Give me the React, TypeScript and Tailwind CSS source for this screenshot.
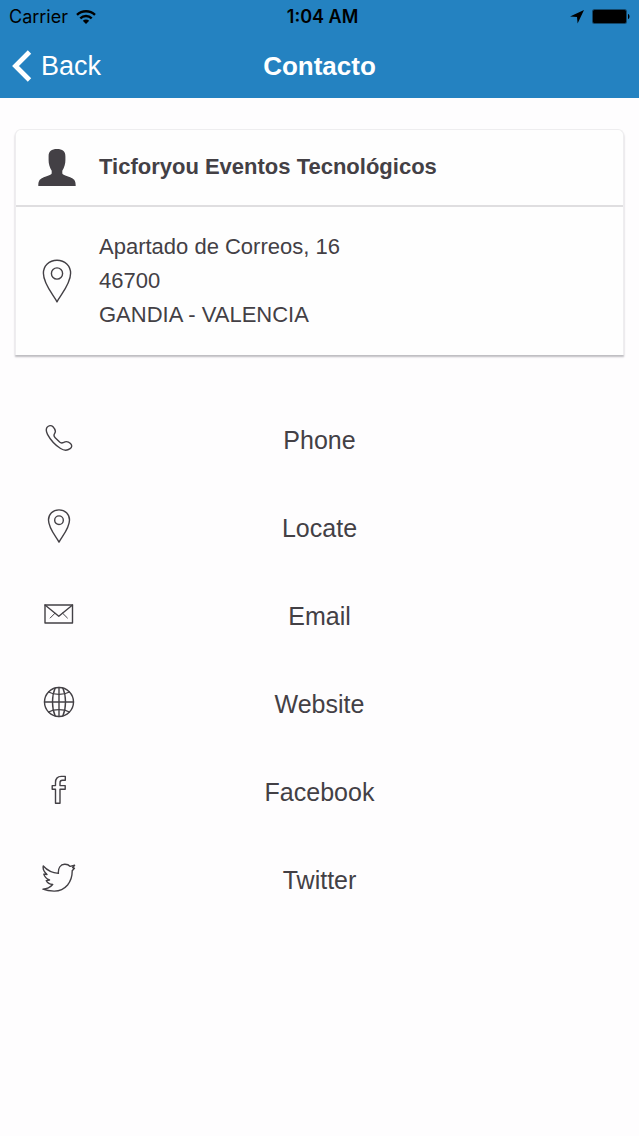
import type { ReactNode } from "react";

function Line({ children, className, viewBox }: { children: ReactNode; className: string; viewBox: string }) {
  return (
    <svg
      aria-hidden="true"
      viewBox={viewBox}
      className={className}
      fill="none"
      stroke="currentColor"
      strokeWidth="1.4"
      strokeLinejoin="round"
      strokeLinecap="round"
    >
      {children}
    </svg>
  );
}

function PinIcon({ className, strokeWidth }: { className: string; strokeWidth: number }) {
  return (
    <Line viewBox="0 0 30 44" className={className}>
      <g strokeWidth={strokeWidth}>
        <path d="M15 42.8C11 35.5 1.4 25 1.4 14.3C1.4 6.8 7 1.2 15 1.2S28.6 6.8 28.6 14.3C28.6 25 19 35.5 15 42.8Z" />
        <circle cx="15" cy="14.5" r="5.6" />
      </g>
    </Line>
  );
}

function PhoneIcon() {
  return (
    <Line viewBox="0 0 28 28" className="size-7">
      <path d="M2 3.4C3.5 1.3 6.3 1 8 2.7C10 4.8 11.1 7.3 9.7 9.3C8.4 11.2 8.7 12.3 10.2 13.8L14.6 18.1C15.8 19.2 17 19.3 18.7 18.4C21 17.1 23.7 17.8 25.5 19.5C27.3 21.2 27 23.5 25.1 24.7C22.6 26.4 19.2 26.8 15.6 24.5C10.2 21 5.3 15.5 2.5 10.3C1.2 7.8 .9 5.2 2 3.4Z" />
    </Line>
  );
}

function MailIcon() {
  return (
    <Line viewBox="0 0 30 20" className="h-5 w-[30px]">
      <path d="M1 1H28.5V19H1Z" />
      <path d="M1 1L14.8 12.2L28.5 1" />
      <path d="M6.2 14L11 9.2M23.4 14L18.6 9.2" strokeWidth="1" />
    </Line>
  );
}

function GlobeIcon() {
  return (
    <Line viewBox="0 0 32 32" className="size-8">
      <circle cx="16" cy="16" r="14.5" />
      <path d="M16 1.5V30.5M1.5 16H30.5" />
      <path d="M12.2 2C8.6 10 8.6 22 12.2 30M19.8 2C23.4 10 23.4 22 19.8 30" />
      <path d="M5.6 6C11 9.2 21 9.2 26.4 6M5.6 26C11 22.8 21 22.8 26.4 26" />
    </Line>
  );
}

function FacebookIcon() {
  return (
    <Line viewBox="0 0 16 30" className="h-[30px] w-4">
      <path d="M4.5 28.3V14.3H1.2V10.6H4.5V7.5C4.5 3.4 6.7 1.4 10.3 1.4H14.3V5.2H11.5C9.7 5.2 9 6.2 9 7.8V10.6H14.2V14.3H9V28.3Z" />
    </Line>
  );
}

function TwitterIcon() {
  return (
    <Line viewBox="0 0 34 30" className="h-[30px] w-[34px]">
      <path d="M16.4 10.4C16 5 18.6 1.6 22.6 1.3C24.9 1.2 26.8 1.9 28.2 3.4L32.6 2.3L30.6 4.7L32.4 5.2L30.2 7.8C30.3 13 28.8 18 25.6 22C22 26.2 17.4 28.2 12 28.1C7.6 28 4.2 27.4 .9 26.2C4.8 25.9 8.2 24.3 10.7 21.5C7.6 21.2 5.6 20 4.3 17.6L7.5 17C4.6 15.8 2.6 13.8 1.8 11.1L5 11.5C2 9 .6 6.2 1.3 3C5.4 7.6 10.4 9.9 16.4 10.4Z" />
    </Line>
  );
}

function PersonIcon() {
  return (
    <svg aria-hidden="true" viewBox="0 0 38 38" className="size-[38px]" fill="currentColor">
      <path d="M19 0C24.4 0 27.5 2.3 27.4 7.4V11C27.5 14.8 26.3 18.6 24.3 21.8V24.6C25.4 26.6 30 27.4 33.6 29C36.6 30.4 37.7 32 37.7 37H.3C.3 32 1.4 30.4 4.4 29C8 27.4 12.6 26.6 13.7 24.6V21.8C11.7 18.6 10.5 14.8 10.6 11V7.4C10.5 2.3 13.6 0 19 0Z" />
    </svg>
  );
}

const actions = [
  { label: "Phone", href: "#phone", icon: <PhoneIcon /> },
  { label: "Locate", href: "#locate", icon: <PinIcon className="h-[34px] w-6" strokeWidth={1.8} /> },
  { label: "Email", href: "#email", icon: <MailIcon /> },
  { label: "Website", href: "#website", icon: <GlobeIcon /> },
  { label: "Facebook", href: "#facebook", icon: <FacebookIcon /> },
  { label: "Twitter", href: "#twitter", icon: <TwitterIcon /> },
];

function StatusBar() {
  return (
    <div className="grid h-[33px] grid-cols-[34fr_33fr_33fr] items-center px-[9px] font-['Inter',sans-serif] text-lg text-black">
      <div className="flex items-center gap-2">
        <span>Carrier</span>
        <svg aria-hidden="true" viewBox="0 0 20 14" className="h-[14px] w-5" fill="none" stroke="currentColor" strokeWidth="2.4">
          <path d="M1 4.9C6 .1 14 .1 19 4.9" />
          <path d="M4.3 8.3C7.5 5.3 12.5 5.3 15.7 8.3" />
          <path d="M10 14L6.8 10.7C8.6 9.2 11.4 9.2 13.2 10.7Z" fill="currentColor" stroke="none" />
        </svg>
      </div>
      <time className="text-center font-semibold">1:04 AM</time>
      <div className="flex items-center justify-end gap-2">
        <svg aria-hidden="true" viewBox="0 0 14 14" className="size-[14px]" fill="currentColor">
          <path d="M14 0L7.6 13.5L7 7L0 6.5Z" />
        </svg>
        <svg aria-hidden="true" viewBox="0 0 38 15" className="h-[15px] w-[38px]" fill="currentColor">
          <rect x="0" y="0" width="35" height="15" rx="2.5" opacity=".45" />
          <rect x="1" y="1" width="33" height="13" rx="1.5" />
          <path d="M36 5C38 5.6 38 9.4 36 10Z" />
        </svg>
      </div>
    </div>
  );
}

export default function App() {
  return (
    <div className="min-h-screen bg-[#fefdfe] font-['Liberation_Sans',Arial,sans-serif] text-[#434045]">
      <header className="bg-[#2482c1] text-white">
        <StatusBar />
        <div className="grid h-[65px] grid-cols-3 items-center px-3">
          <button type="button" className="flex items-center gap-[9px] justify-self-start text-[27px] leading-8">
            <svg aria-hidden="true" viewBox="0 0 20 32" className="h-8 w-5" fill="none" stroke="currentColor" strokeWidth="4.8">
              <path d="M17.5 2L3.5 16L17.5 30" />
            </svg>
            Back
          </button>
          <h1 className="text-center text-[26px] leading-8 font-bold">Contacto</h1>
        </div>
      </header>

      <main>
        <section className="mx-[15px] mt-[31px] rounded-t-md border-x border-t border-[#eeedef] bg-[#fefefe] text-[22px] shadow-[0_2px_2px_#bdbcc0]">
          <div className="flex h-[77px] items-center border-b-2 border-[#dfdee0]">
            <div className="flex w-[83px] justify-center pr-[2px]">
              <PersonIcon />
            </div>
            <h2 className="pb-[2px] font-bold">Ticforyou Eventos Tecnológicos</h2>
          </div>
          <div className="flex items-center py-[23px]">
            <div className="flex w-[83px] justify-center pr-[2px]">
              <PinIcon className="h-11 w-[30px]" strokeWidth={1.4} />
            </div>
            <address className="leading-[34px] not-italic">
              Apartado de Correos, 16
              <br />
              46700
              <br />
              GANDIA - VALENCIA
            </address>
          </div>
        </section>

        <nav className="mt-[42px] px-4" aria-label="Contact options">
          {actions.map((action) => (
            <a
              key={action.label}
              href={action.href}
              className="grid h-22 grid-cols-[86px_1fr_86px] items-center text-center text-[25px]"
            >
              <span className="flex justify-center pb-[6px]">{action.icon}</span>
              <span>{action.label}</span>
            </a>
          ))}
        </nav>
      </main>
    </div>
  );
}
